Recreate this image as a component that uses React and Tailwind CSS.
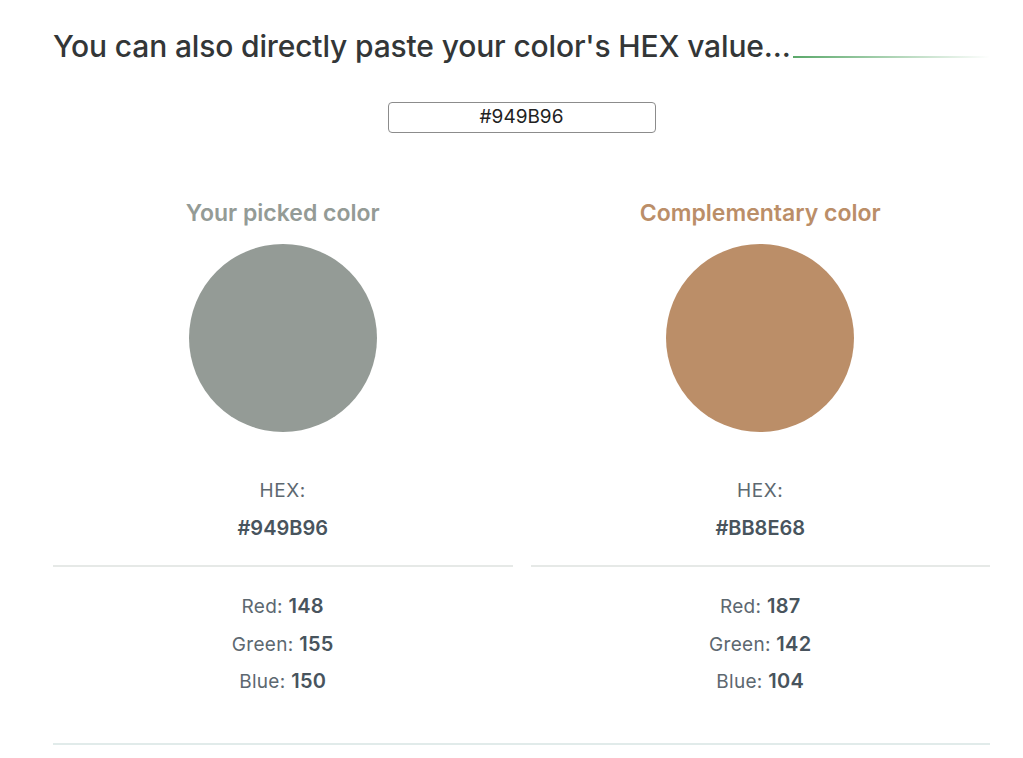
import React from "react";

function Column({ title, titleColor, color, hex, r, g, b }) {
  return (
    <div className="flex flex-col items-center">
      <div className="text-[23px] font-semibold leading-[30px]" style={{ color: titleColor }}>{title}</div>
      <div className="w-[188px] h-[188px] rounded-full mt-[16px]" style={{ backgroundColor: color }} />
      <div className="mt-[46px] text-[19px] leading-[26px] tracking-[0.6px] text-[#5d6870]">HEX:</div>
      <div className="mt-[11px] text-[20px] leading-[26px] font-semibold text-[#48545d]">{hex}</div>
      <div className="mt-[24px] w-full h-[2px] bg-[#e6e9e7]" />
      <div className="mt-[21px] flex flex-col items-center text-[19px] leading-[37.5px] tracking-[0.3px] text-[#5d6870]">
        <div>Red: <span className="font-semibold text-[#48545d] text-[20px]">{r}</span></div>
        <div>Green: <span className="font-semibold text-[#48545d] text-[20px]">{g}</span></div>
        <div>Blue: <span className="font-semibold text-[#48545d] text-[20px]">{b}</span></div>
      </div>
    </div>
  );
}

export default function App() {
  return (
    <div className="w-[1023px] h-[758px] bg-white overflow-hidden" style={{ fontFamily: "Inter, 'Noto Sans', sans-serif" }}>
      <div className="pl-[53px] pr-[33px] pt-[26px]">
        <div className="flex items-end">
          <h1 className="text-[30px] leading-[40px] font-medium text-[#333637] tracking-[-0.15px] whitespace-nowrap">
            You can also directly paste your color's HEX value...
          </h1>
          <div className="flex-1 h-[2px] mb-[8px] ml-[2px] bg-gradient-to-r from-[#5aa86a] to-transparent" />
        </div>
        <div className="flex justify-center mt-[36px]">
          <div className="w-[268px] h-[31px] border border-[#8c8c8c] rounded-[4px] flex items-center justify-center text-[19px] text-[#222]">
            #949B96
          </div>
        </div>
        <div className="grid grid-cols-2 gap-[18px] mt-[65px] w-[937px]">
          <Column title="Your picked color" titleColor="#949B96" color="#949B96" hex="#949B96" r="148" g="155" b="150" />
          <Column title="Complementary color" titleColor="#BB8E68" color="#BB8E68" hex="#BB8E68" r="187" g="142" b="104" />
        </div>
        <div className="mt-[42px] w-[937px] h-[2px] bg-[#e1ebea]" />
      </div>
    </div>
  );
}
